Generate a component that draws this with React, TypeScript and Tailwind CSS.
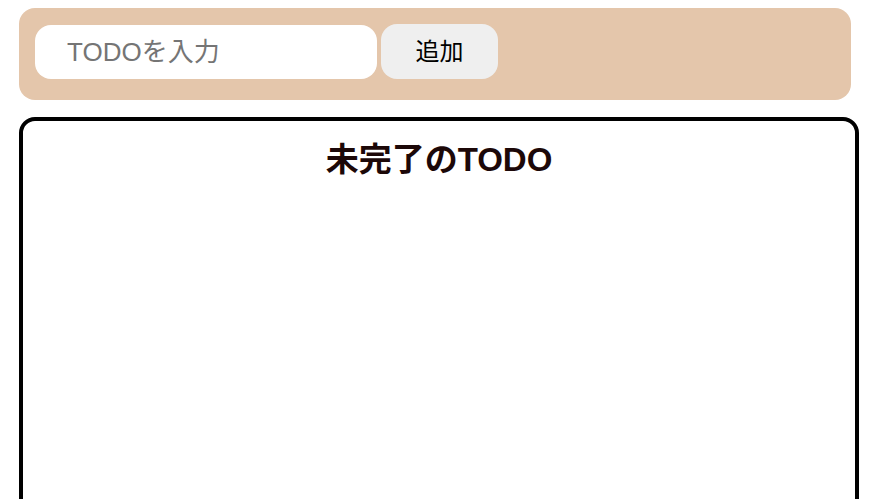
import React, { useState } from 'react';

export default function App() {
	const [todoText, setTodoText] = useState('');

	return (
		<div
			className="min-h-screen bg-white pt-2 pl-[19px]"
			style={{ fontFamily: '"Liberation Sans", "Noto Sans CJK JP", sans-serif' }}
		>
			<div className="flex w-[832px] h-[92px] items-start gap-[4px] rounded-[16px] bg-[#e4c6ab] px-4 pt-4">
				<input
					className="mt-[1px] h-[54px] w-[342px] rounded-[16px] bg-white px-8 text-[26px] text-black outline-none placeholder:text-[#757575]"
					value={todoText}
					onChange={(e) => setTodoText(e.target.value)}
					placeholder="TODOを入力"
				/>
				<button className="h-[55px] w-[117px] rounded-[16px] bg-[#efefef] text-[24px] text-black">
					追加
				</button>
			</div>

			<div className="mt-[17px] h-[400px] w-[840px] rounded-[16px] border-4 border-black">
				<p className="mt-[15px] text-center text-[33px] font-bold leading-[48px] text-[#1c0808]">
					未完了のTODO
				</p>
				<ul></ul>
			</div>
		</div>
	);
}
